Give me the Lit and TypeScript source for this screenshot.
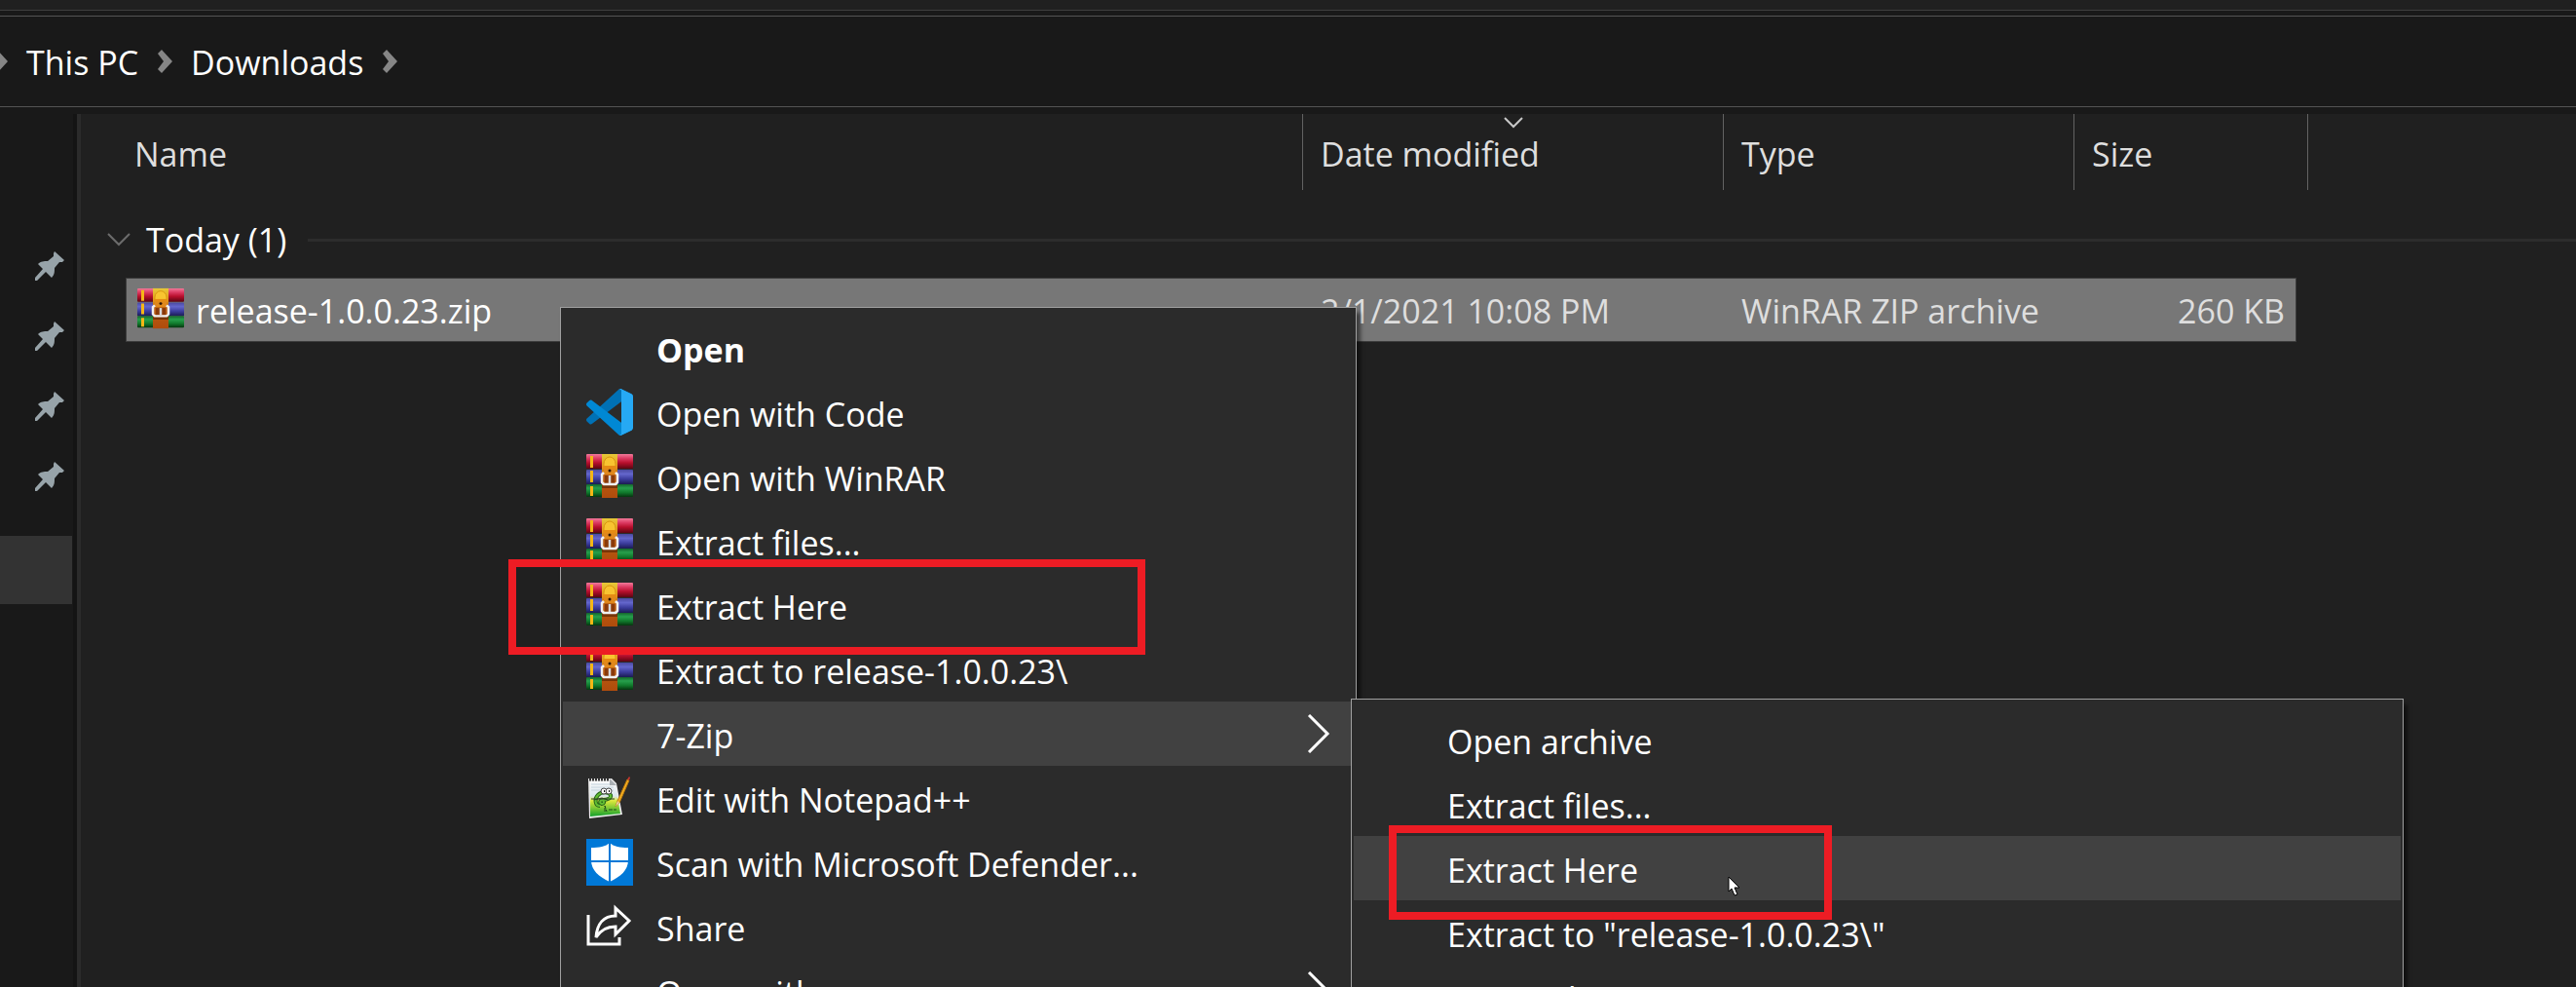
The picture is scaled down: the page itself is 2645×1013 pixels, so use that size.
import { LitElement, html, css, svg, nothing } from "lit";
import { customElement, property } from "lit/decorators.js";

type IconName = "code" | "rar" | "notepad" | "shield" | "share";

interface MenuEntry {
  label: string;
  icon?: IconName;
  bold?: boolean;
  active?: boolean;
  submenu?: boolean;
}

const rarArt = svg`
  <defs>
    <linearGradient id="red" x1="0" y1="0" x2="0" y2="1">
      <stop offset="0" stop-color="#f27a9a"/><stop offset=".3" stop-color="#dc3a62"/>
      <stop offset=".6" stop-color="#b80f2c"/><stop offset="1" stop-color="#5c0612"/>
    </linearGradient>
    <linearGradient id="blue" x1="0" y1="0" x2="0" y2="1">
      <stop offset="0" stop-color="#4a4aa0"/><stop offset=".3" stop-color="#6466cc"/>
      <stop offset=".65" stop-color="#3b3c9c"/><stop offset="1" stop-color="#1b1b52"/>
    </linearGradient>
    <linearGradient id="green" x1="0" y1="0" x2="0" y2="1">
      <stop offset="0" stop-color="#14642c"/><stop offset=".3" stop-color="#27a04c"/>
      <stop offset=".65" stop-color="#117a2c"/><stop offset="1" stop-color="#06350f"/>
    </linearGradient>
    <linearGradient id="strap" x1="0" y1="0" x2="0" y2="1">
      <stop offset="0" stop-color="#e8c838"/><stop offset=".3" stop-color="#e09a1c"/>
      <stop offset=".5" stop-color="#b85c12"/><stop offset="1" stop-color="#b04c0c"/>
    </linearGradient>
  </defs>
  <rect x="0" y="1" width="48" height="15" rx="1" fill="url(#red)"/>
  <rect x="0" y="17" width="48" height="15" rx="1" fill="url(#blue)"/>
  <rect x="0" y="32" width="48" height="13" rx="1" fill="url(#green)"/>
  <path d="M4 3h3v12H4zM4 18h3v12H4zM4 34h3v10H4z" fill="#f5b716"/>
  <rect x="16" y="1" width="16" height="45" fill="url(#strap)"/>
  <path d="M16 33h16v3H16z" fill="#5e2806" opacity=".7"/>
  <path d="M18 11a6 7 0 0 1 12 0v3H18z" fill="#f8c430" stroke="#d8960e"/>
  <path d="M17 13h14v3H17z" fill="#e58c14"/>
  <path d="M18 16h12v6H18z" fill="#e0881c"/>
  <circle cx="24" cy="18" r="1.500" fill="#2c1404"/>
  <path d="M19 23h10v8H19z" fill="#8a3a0a"/>
  <path d="M18 20l-2 2v8l2 2h12l2-2v-8l-2-2" fill="none" stroke="#f0f0f0" stroke-width="2.500" stroke-linejoin="round"/>
  <path d="M24 23v8" stroke="#d8d8d8" stroke-width="2.500"/>
`;

const icons: Record<IconName, unknown> = {
  rar: rarArt,
  code: svg`
    <g transform="scale(.48)">
      <path fill="#0071b5" d="M96.460 10.800L75.860.88C73.470-.27 70.620.21 68.750 2.080L1.300 63.580c-1.820 1.650-1.810 4.510 0 6.160l5.510 5.010c1.490 1.350 3.720 1.450 5.320.24L93.360 13.370C96.090 11.300 100 13.250 100 16.670v-.24c0-2.400-1.380-4.590-3.540-5.630z"/>
      <path fill="#0088d4" d="M96.460 89.200L75.860 99.120c-2.390 1.150-5.240.67-7.110-1.200L1.300 36.420c-1.820-1.650-1.810-4.510 0-6.160l5.510-5.010c1.490-1.350 3.720-1.450 5.320-.24l81.230 61.620c2.730 2.070 6.640.12 6.640-3.300v.24c0 2.400-1.380 4.590-3.540 5.630z"/>
      <path fill="#26a9f4" d="M75.860 99.130c-2.390 1.150-5.240.66-7.110-1.210 2.310 2.310 6.250.67 6.250-2.590V4.670c0-3.260-3.940-4.900-6.250-2.590 1.870-1.870 4.720-2.360 7.110-1.210l20.600 9.910c2.160 1.040 3.540 3.230 3.540 5.630v67.170c0 2.400-1.380 4.590-3.540 5.630l-20.600 9.910z"/>
    </g>`,
  notepad: svg`
    <defs>
      <linearGradient id="page" x1="0" y1="0" x2="0" y2="1">
        <stop offset="0" stop-color="#fafafa"/><stop offset=".42" stop-color="#dce8f0"/>
        <stop offset=".55" stop-color="#dcea3c"/><stop offset="1" stop-color="#12a02c"/>
      </linearGradient>
    </defs>
    <path d="M2 4h24l5 5 6 32-34 4z" fill="#ececec"/>
    <path d="M4 7h21l5 4 5 29-31 3z" fill="url(#page)"/>
    <path d="M3 5h20" stroke="#333" stroke-width="3" stroke-dasharray="2 1"/>
    <path d="M5 10h19M5 13h23M5 16h23" stroke="#c3d2dc" stroke-width="1"/>
    <path d="M24 4v7h7z" fill="#aab0b4"/>
    <path d="M14 32c-5 0-6-7-2-11 4-4 11-3 13 0 1 3-3 5-8 5-3 0-4 3-1 4 2 0 3-2 1-3" fill="none" stroke="#26651a" stroke-width="4"/>
    <path d="M14 32c-5 0-6-7-2-11 4-4 11-3 13 0 1 3-3 5-8 5-3 0-4 3-1 4 2 0 3-2 1-3" fill="none" stroke="#62bd33" stroke-width="2"/>
    <path d="M5 25h24M8 26l8-2 6 2" stroke="#2e4424" stroke-width="1" fill="none"/>
    <circle cx="18" cy="17" r="3" fill="#fff" stroke="#444"/>
    <circle cx="23" cy="17" r="3" fill="#fff" stroke="#444"/>
    <path d="M18 17h1M23 17h1" stroke="#111" stroke-width="2"/>
    <path d="M19 38v-6l2 6M23 36h8" stroke="#1d4a1a" stroke-width="1" fill="none" stroke-dasharray="4 1"/>
    <path d="M30 33l2-6L42 5l2 1-10 23z" fill="#f5b021" stroke="#b8780e" stroke-width="1"/>
    <path d="M42 5l2-3 1 1-1 3z" fill="#c6352f"/>
    <path d="M30 33l2-6 2 2z" fill="#e8cf9c"/>`,
  shield: svg`
    <path d="M0 0h48v48H0z" fill="#0078d7"/>
    <path d="M24 4c4 4 11 5 19 5v13c0 10-8 17-19 22C13 39 5 32 5 22V9c8 0 15-1 19-5z" fill="#fff"/>
    <path d="M24 2v44M3 23h42" stroke="#0078d7" stroke-width="2"/>`,
  share: svg`
    <path d="M2 12v30h32v-7" fill="none" stroke="#fff" stroke-width="3"/>
    <path d="M30 5l14 13-14 14v-8c-9 0-15 3-20 11 1-14 8-22 20-22z" fill="none" stroke="#fff" stroke-width="3"/>`,
};

@customElement("context-menu")
export class ContextMenu extends LitElement {
  @property({ attribute: false }) entries: MenuEntry[] = [];

  static styles = css`
    :host {
      display: block;
      box-sizing: border-box;
      padding: 8px 2px;
      border: 1px solid #a0a0a0;
      background: #2b2b2b;
      box-shadow: 4px 6px 4px rgba(0, 0, 0, 0.5);
    }
    .item {
      display: flex;
      align-items: center;
      gap: 24px;
      box-sizing: border-box;
      width: 100%;
      height: 66px;
      padding: 0 24px;
      border: 0;
      background: none;
      color: #fff;
      font: inherit;
      text-align: left;
      white-space: nowrap;
    }
    .active {
      background: #414141;
    }
    .bold {
      font-weight: 700;
    }
    .icon {
      flex: none;
      width: 48px;
      height: 48px;
    }
    .label {
      flex: 1;
      padding-top: 3px;
    }
    .arrow {
      width: 24px;
      height: 40px;
      fill: none;
      stroke: #fff;
      stroke-width: 3;
    }
  `;

  render() {
    return this.entries.map(
      (e) => html`
        <button
          class="item ${e.active ? "active" : ""} ${e.bold ? "bold" : ""}"
          type="button"
          role="menuitem"
        >
          <svg class="icon" viewBox="0 0 48 48" aria-hidden="true">
            ${e.icon ? icons[e.icon] : nothing}
          </svg>
          <span class="label">${e.label}</span>
          ${e.submenu
            ? html`<svg class="arrow" viewBox="0 0 24 40" aria-hidden="true">
                <path d="M2 1l19 19L2 39" />
              </svg>`
            : nothing}
        </button>
      `,
    );
  }
}

@customElement("app-root")
export class AppRoot extends LitElement {
  static styles = css`
    :host {
      display: block;
      font-family: "Segoe UI", "Open Sans", "Noto Sans", sans-serif;
      font-size: 34px;
      line-height: 46px;
      color: #fff;
    }
    .window {
      position: relative;
      display: flex;
      flex-direction: column;
      height: 100vh;
      overflow: hidden;
      background: #191919;
    }
    .ribbon {
      flex: none;
      height: 10px;
      background: #202020;
      border-bottom: 1px solid #3e3e3e;
    }
    .address {
      flex: none;
      display: flex;
      align-items: center;
      gap: 19px;
      height: 92px;
      margin: 5px 0 7px;
      border-top: 1px solid #535353;
      border-bottom: 1px solid #535353;
    }
    .crumb {
      padding-top: 2px;
      color: #fff;
      text-decoration: none;
    }
    .sep {
      width: 16px;
      height: 24px;
      fill: #868686;
    }
    .sep.cut {
      width: 8px;
    }
    .body {
      flex: 1;
      display: flex;
      min-height: 0;
    }
    .sidebar {
      flex: none;
      width: 75px;
      padding-top: 120px;
      border-right: 4px solid #141414;
    }
    .pin {
      display: flex;
      align-items: center;
      justify-content: flex-end;
      height: 72px;
      padding-right: 9px;
    }
    .pin svg {
      width: 30px;
      height: 30px;
      fill: #97a3a9;
    }
    .current {
      height: 70px;
      margin: 25px 1px 0 0;
      background: #333;
    }
    .files {
      flex: 1;
      min-width: 0;
      background: #202020;
      border-left: 4px solid #2b2b2b;
    }
    table {
      width: 100%;
      table-layout: fixed;
      border-collapse: separate;
      border-spacing: 0;
    }
    th,
    td {
      padding: 0;
      font-weight: 400;
      text-align: left;
      white-space: nowrap;
      color: #dedede;
    }
    .c-lead {
      width: 46px;
    }
    .c-name {
      width: 1209px;
    }
    .c-date {
      width: 432px;
    }
    .c-type {
      width: 360px;
    }
    .c-size {
      width: 228px;
    }
    .c-gap {
      width: 12px;
    }
    .head th {
      position: relative;
      box-sizing: border-box;
      height: 78px;
      padding: 3px 0 0 18px;
    }
    .head .ruled {
      border-right: 1px solid #636363;
    }
    .head .name {
      padding-left: 9px;
    }
    .sort {
      position: absolute;
      top: 3px;
      left: 50%;
      width: 20px;
      height: 12px;
      margin-left: -10px;
      fill: none;
      stroke: #c8c8c8;
      stroke-width: 2;
    }
    .group {
      display: flex;
      align-items: center;
      gap: 16px;
      width: 100%;
      height: 90px;
      padding: 12px 0 0 27px;
      border: 0;
      background: none;
      color: #fff;
      font: inherit;
    }
    .group svg {
      width: 24px;
      height: 14px;
      fill: none;
      stroke: #6c6c6c;
      stroke-width: 2;
    }
    .rule {
      flex: 1;
      height: 3px;
      margin-left: 6px;
      background: #2c2c2c;
    }
    .row td {
      box-sizing: border-box;
      height: 66px;
      padding: 2px 0 0 18px;
    }
    .row .sel {
      background: #777;
      border-top: 1px solid #3c3c3c;
      border-bottom: 1px solid #3c3c3c;
    }
    .row .first {
      padding-left: 11px;
      border-left: 1px solid #3c3c3c;
      color: #fff;
    }
    .row .last {
      padding-right: 11px;
      border-right: 1px solid #3c3c3c;
      text-align: right;
    }
    .file {
      display: flex;
      align-items: center;
      gap: 12px;
    }
    .file svg {
      width: 48px;
      height: 44px;
      margin-bottom: 4px;
    }
    .menu {
      position: absolute;
      top: 315px;
      left: 575px;
      width: 818px;
    }
    .submenu {
      position: absolute;
      top: 717px;
      left: 1387px;
      width: 1081px;
    }
    .mark {
      position: absolute;
      box-sizing: border-box;
      border: 8px solid #ed1c24;
      pointer-events: none;
    }
    .mark-main {
      top: 574px;
      left: 522px;
      width: 654px;
      height: 98px;
    }
    .mark-sub {
      top: 847px;
      left: 1426px;
      width: 455px;
      height: 97px;
    }
    .pointer {
      position: absolute;
      top: 899px;
      left: 1774px;
      width: 14px;
      height: 22px;
    }
  `;

  private mainMenu: MenuEntry[] = [
    { label: "Open", bold: true },
    { label: "Open with Code", icon: "code" },
    { label: "Open with WinRAR", icon: "rar" },
    { label: "Extract files...", icon: "rar" },
    { label: "Extract Here", icon: "rar" },
    { label: "Extract to release-1.0.0.23\\", icon: "rar" },
    { label: "7-Zip", active: true, submenu: true },
    { label: "Edit with Notepad++", icon: "notepad" },
    { label: "Scan with Microsoft Defender...", icon: "shield" },
    { label: "Share", icon: "share" },
    { label: "Open with", submenu: true },
  ];

  private zipMenu: MenuEntry[] = [
    { label: "Open archive" },
    { label: "Extract files..." },
    { label: "Extract Here", active: true },
    { label: 'Extract to "release-1.0.0.23\\"' },
    { label: "Test archive" },
  ];

  private separator(cut = false) {
    return html`<svg
      class="sep ${cut ? "cut" : ""}"
      viewBox=${cut ? "8 0 8 24" : "0 0 16 24"}
      aria-hidden="true"
    >
      <path d="M1 4l4-4 11 12L5 24l-4-4 6-8z" />
    </svg>`;
  }

  render() {
    return html`
      <main class="window">
        <div class="ribbon"></div>
        <nav class="address" aria-label="Address">
          ${this.separator(true)}
          <a class="crumb" href="#this-pc">This PC</a>
          ${this.separator()}
          <a class="crumb" href="#downloads">Downloads</a>
          ${this.separator()}
        </nav>
        <div class="body">
          <aside class="sidebar">
            ${[0, 1, 2, 3].map(
              () => html`<div class="pin">
                <svg viewBox="0 0 30 30" aria-hidden="true">
                  <path
                    d="M20 0l10 9-2 2h-3l-5 6c0 4 0 7-3 10l-6-6-9 9H0v-3l8-9-5-5c3-3 6-3 10-3l6-5V2z"
                  />
                </svg>
              </div>`,
            )}
            <div class="current"></div>
          </aside>
          <section class="files">
            <table>
              <colgroup>
                <col class="c-lead" />
                <col class="c-name" />
                <col class="c-date" />
                <col class="c-type" />
                <col class="c-size" />
                <col class="c-gap" />
                <col />
              </colgroup>
              <thead>
                <tr class="head">
                  <td></td>
                  <th class="name ruled" scope="col">Name</th>
                  <th class="ruled" scope="col">
                    Date modified
                    <svg class="sort" viewBox="0 0 20 12" aria-hidden="true">
                      <path d="M1 1l9 9 9-9" />
                    </svg>
                  </th>
                  <th class="ruled" scope="col">Type</th>
                  <th class="ruled" scope="col" colspan="2">Size</th>
                  <td></td>
                </tr>
              </thead>
              <tbody>
                <tr>
                  <th colspan="7" scope="rowgroup">
                    <button class="group" type="button">
                      <svg viewBox="0 0 24 14" aria-hidden="true">
                        <path d="M1 1l11 11L23 1" />
                      </svg>
                      <span>Today (1)</span>
                      <span class="rule"></span>
                    </button>
                  </th>
                </tr>
                <tr class="row">
                  <td></td>
                  <td class="sel first">
                    <span class="file">
                      <svg viewBox="0 0 48 48" preserveAspectRatio="none" aria-hidden="true">
                        ${rarArt}
                      </svg>
                      release-1.0.0.23.zip
                    </span>
                  </td>
                  <td class="sel">2/1/2021 10:08 PM</td>
                  <td class="sel">WinRAR ZIP archive</td>
                  <td class="sel last">260 KB</td>
                  <td></td>
                  <td></td>
                </tr>
              </tbody>
            </table>
          </section>
        </div>
        <context-menu class="menu" role="menu" .entries=${this.mainMenu}></context-menu>
        <context-menu class="submenu" role="menu" .entries=${this.zipMenu}></context-menu>
        <div class="mark mark-main"></div>
        <div class="mark mark-sub"></div>
        <svg class="pointer" viewBox="0 0 14 22" aria-hidden="true">
          <path
            d="M1 1v15l3-3 3 7 3-1-3-7h5z"
            fill="#fff"
            stroke="#000"
            stroke-width="1"
          />
        </svg>
      </main>
    `;
  }
}
